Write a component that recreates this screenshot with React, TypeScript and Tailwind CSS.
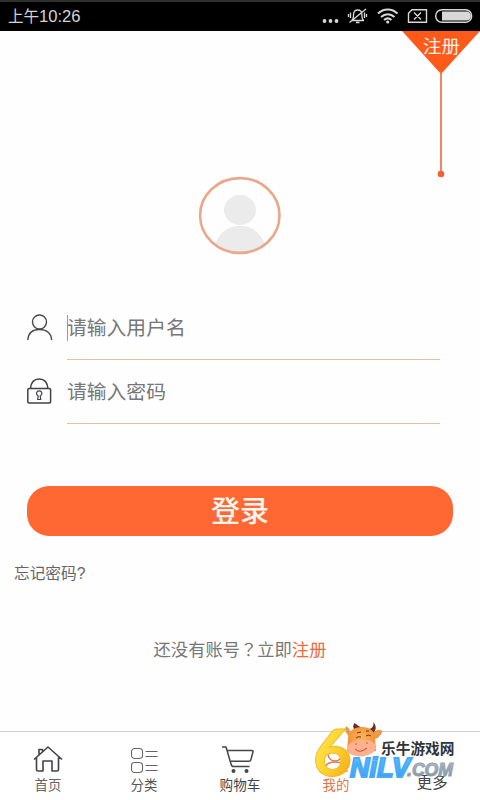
import { useState } from 'react';
import type { ReactNode } from 'react';

const StatusBar = () => (
  <header className="flex h-[31px] shrink-0 items-center justify-between border-t-2 border-[#2c3030] bg-black pl-2 pr-[7px] text-[#d4d4d4]">
    <span className="pt-0.5 text-[15.5px] leading-none">上午<span className="text-[16.6px]">10:26</span></span>
    <svg width="152" height="24" viewBox="322 5 152 24" fill="none" stroke="#d8d8d8" strokeWidth="1.4">
      <g fill="#d8d8d8" stroke="none">
        <circle cx="325.5" cy="21" r="1.9" />
        <circle cx="331.5" cy="21" r="1.9" />
        <circle cx="337.5" cy="21" r="1.9" />
      </g>
      <path d="M352.5 20.5c2-1 2-3 2-5.500c0-3 1.500-5 4.200-5s4.200 2 4.200 5c0 2.500 0 4.500 2 5.500zM357 22.500h3.500M350.500 22.500L367 9M351.500 12.500v5.500M349.500 14v3M365.500 12.500v5.500M367.500 14v3" strokeWidth="1.300" />
      <path d="M379 13.500c5.500-5.500 14-5.500 19.500 0M382 17c4-3.800 9.500-3.800 13.500 0M385 20c2.500-2.200 5-2.200 7.500 0" strokeWidth="2" />
      <circle cx="388.700" cy="22" r="1.600" fill="#d8d8d8" stroke="none" />
      <path d="M413 9.700h14.500v12.600h-18v-9zM415 12.500l7 7M422 12.500l-7 7" />
      <rect x="436.700" y="9.700" width="36" height="12.600" rx="6.300" />
      <path d="M443 11.500h24.500a4.500 4.500 0 0 1 0 9H443z" fill="#d8d8d8" stroke="none" />
    </svg>
  </header>
);

const RegisterRibbon = () => (
  <button className="absolute right-0 top-0 h-[148px] w-[78px]">
    <svg className="absolute inset-0" width="78" height="148" viewBox="0 0 78 148">
      <path d="M0 0H78L39 43z" fill="#ff5a1a" />
      <path d="M39 40V142" stroke="#ee6a3c" strokeWidth="1.6" />
      <circle cx="39" cy="143" r="3.3" fill="#f26132" />
    </svg>
    <span className="absolute left-[21px] top-[6px] text-[18.4px] leading-[20px] text-[#fff1e6]">注册</span>
  </button>
);

const Avatar = () => (
  <svg className="mx-auto mt-[145px] shrink-0" width="84" height="80" viewBox="198 176 84 80">
    <defs>
      <clipPath id="avatar">
        <ellipse cx="239.800" cy="215.500" rx="39" ry="36.500" />
      </clipPath>
    </defs>
    <g clipPath="url(#avatar)" fill="#ebebeb">
      <ellipse cx="240" cy="210" rx="16" ry="15" />
      <path d="M213 256c1-19 12-30 27-30s26 11 27 30z" />
    </g>
    <ellipse cx="239.800" cy="215.500" rx="39.700" ry="37.400" fill="none" stroke="#eaa88b" strokeWidth="2.600" />
  </svg>
);

interface FieldProps {
  icon: ReactNode;
  type: string;
  placeholder: string;
  value: string;
  caret?: boolean;
  onChange: (value: string) => void;
}

const Field = ({ icon, type, placeholder, value, caret, onChange }: FieldProps) => (
  <label className="flex h-16 items-stretch">
    <span className="flex w-10 items-center">{icon}</span>
    <span className="flex w-[373px] items-center border-b border-[#e3c39a]">
      {caret && <span className="-mr-px h-[26px] w-px bg-[#999]" />}
      <input
        type={type}
        value={value}
        placeholder={placeholder}
        onChange={(e) => onChange(e.target.value)}
        className="h-8 w-full bg-transparent pt-px text-[19.8px] text-[#777] outline-none placeholder:text-[#777]"
      />
    </span>
  </label>
);

const UserIcon = () => (
  <svg width="26" height="28" viewBox="0 0 26 28" fill="none" stroke="#4a4a52" strokeWidth="1.4">
    <circle cx="12.500" cy="8" r="7" />
    <path d="M.8 26c.5-7 5-10.500 11.700-10.500S24.200 19 24.700 26" />
  </svg>
);

const LockIcon = () => (
  <svg width="26" height="28" viewBox="0 0 26 28" fill="none" stroke="#42424a" strokeWidth="1.5">
    <rect x=".8" y="10.500" width="22.800" height="14.500" rx="1.200" />
    <path d="M3.500 10.500C4 4.500 7.300 1 12.200 1s8.200 3.500 8.700 9.500" />
    <path d="M11.200 18a2.700 2.700 0 1 1 2 0l.5 3.500h-3z" strokeWidth="1.200" />
  </svg>
);

const tabs = [
  {
    name: '首页',
    label: 'text-[13.4px] text-[#666]',
    icon: (
      <g stroke="#42424a" strokeWidth="1.600" strokeLinejoin="round">
        <path d="M2 14.500L16 2l14 12.500M4.500 12.500v12q0 1.500 1.500 1.500h5V16h9v10h5q1.500 0 1.500-1.500V12.500M7 10V4.500h3.500V6.500" />
      </g>
    ),
  },
  {
    name: '分类',
    label: 'text-[13.4px] text-[#555]',
    icon: (
      <g stroke="#666" strokeWidth="1.100">
        <rect x="3.500" y="3.500" width="11" height="10" rx="3.200" />
        <rect x="3.500" y="17.500" width="11" height="10" rx="3.200" />
        <path d="M17.500 6.500h12M17.500 11.500h12M17.500 20.500h12M17.500 25.500h12" />
      </g>
    ),
  },
  {
    name: '购物车',
    label: 'text-[13.6px] text-[#444]',
    icon: (
      <g stroke="#45454d" strokeWidth="1.500" strokeLinejoin="round">
        <path d="M-2 2h4l5 17q.5 2.500 2.500 2.500h16M3 5.500h25q1.200 0 1 1.300l-2.200 8.200q-.4 1.200-1.600 1.200H6.200" />
        <g fill="#45454d" stroke="none">
          <circle cx="9.500" cy="26" r="2" />
          <circle cx="22.500" cy="26" r="2" />
        </g>
      </g>
    ),
  },
  {
    name: '我的',
    label: 'text-[13.4px] text-[#e2754d]',
    icon: (
      <g stroke="#e2754d" strokeWidth="1.300">
        <circle cx="15" cy="9" r="7" />
        <path d="M3 27c1-7 5-10 12-10s11 3 12 10" />
      </g>
    ),
  },
  {
    name: '更多',
    label: 'relative -top-[3px] text-[15.6px] text-[#444]',
    icon: null,
  },
];

const TabBar = () => (
  <nav className="flex h-[69px] shrink-0 border-t border-[#cfcfcf] bg-white">
    {tabs.map((tab) => (
      <button key={tab.name} className="flex w-24 flex-col items-center pt-[13px]">
        <svg className="overflow-visible" width="32" height="30" viewBox="0 0 32 30" fill="none">
          {tab.icon}
        </svg>
        <span className={`mt-[3px] leading-[16px] ${tab.label}`}>{tab.name}</span>
      </button>
    ))}
  </nav>
);

const SiteLogo = () => (
  <svg className="pointer-events-none absolute bottom-0 right-0" width="180" height="100" viewBox="300 700 180 100">
    <defs>
      <linearGradient id="gold" x1="0" y1="0" x2="1" y2="1">
        <stop offset="0" stopColor="#fff06a" />
        <stop offset=".5" stopColor="#ffd52f" />
        <stop offset="1" stopColor="#f0a010" />
      </linearGradient>
      <linearGradient id="blue" x1="0" y1="0" x2="0" y2="1">
        <stop offset="0" stopColor="#6accff" />
        <stop offset="1" stopColor="#2f92f0" />
      </linearGradient>
      <linearGradient id="steel" x1="0" y1="0" x2="0" y2="1">
        <stop offset="0" stopColor="#b9c6d2" />
        <stop offset="1" stopColor="#74899b" />
      </linearGradient>
      <radialGradient id="cow" cx=".5" cy=".4" r=".6">
        <stop offset="0" stopColor="#ffb755" />
        <stop offset="1" stopColor="#ef8930" />
      </radialGradient>
    </defs>
    <text x="313" y="776" fontFamily="Lato, sans-serif" fontWeight="900" fontSize="65" textLength="39" lengthAdjust="spacingAndGlyphs" fill="url(#gold)" stroke="#f3b42a" strokeWidth=".8">6</text>
    <text x="350" y="776.500" fontFamily="Liberation Sans, sans-serif" fontStyle="italic" fontWeight="700" fontSize="27" textLength="60" lengthAdjust="spacingAndGlyphs" fill="url(#blue)" stroke="#48abf9" strokeWidth="2">NiLV</text>
    <text x="407" y="776" fontFamily="Liberation Sans, sans-serif" fontStyle="italic" fontWeight="700" fontSize="18" textLength="46" lengthAdjust="spacingAndGlyphs" fill="url(#steel)" stroke="#91a3b2" strokeWidth="1">.COM</text>
    <g>
      <path d="M355.500 731q-4-4-1-8l7 5zM369 729q5-1 4.500-7 4.500 6 0 11z" fill="#6b2d22" />
      <path d="M351 734q-3-8-5-7-1 7 5 10zM373 733q4-4 9-2-2 7-9 8z" fill="#f49a3d" stroke="#d77928" strokeWidth=".6" />
      <path d="M348 739c0-8 6-12 14-12s13 4 13 12l1 12h-29z" fill="url(#cow)" />
      <ellipse cx="361.500" cy="748" rx="14.500" ry="8.500" fill="#ffb18c" transform="rotate(-5 361 748)" />
      <path d="M355 749q5 5 12-1" fill="none" stroke="#c34432" strokeWidth="1" />
      <path d="M356 738q2-2 5-1M366 736q2-2 5 0M357 733l4-1M366 731l3 0" fill="none" stroke="#642d20" strokeWidth="1" />
      <circle cx="356" cy="744" r=".7" fill="#a54231" />
      <circle cx="367" cy="743" r=".7" fill="#a54231" />
    </g>
    <text x="381" y="753.500" fontFamily="Noto Sans CJK SC, sans-serif" fontWeight="700" fontSize="14.700" fill="#303338">乐牛游戏网</text>
  </svg>
);

export default function App() {
  const [username, setUsername] = useState('');
  const [password, setPassword] = useState('');

  return (
    <div className="relative flex h-[800px] w-[480px] flex-col overflow-hidden bg-[#fefefe] font-['Liberation_Sans','Noto_Sans_CJK_SC',sans-serif]">
      <StatusBar />
      <main className="relative flex flex-1 flex-col">
        <RegisterRibbon />
        <Avatar />
        <form className="ml-[27px] mt-10 w-[426px]">
          <Field icon={<UserIcon />} type="text" placeholder="请输入用户名" value={username} caret onChange={setUsername} />
          <Field icon={<LockIcon />} type="password" placeholder="请输入密码" value={password} onChange={setPassword} />
          <button type="button" className="mt-[62px] flex h-[50px] w-full items-center justify-center rounded-[22px] bg-[#ff6832] pt-[3px] text-[29px] font-medium leading-none text-[#fff6f0]">
            登录
          </button>
        </form>
        <a className="ml-3.5 mt-7 self-start text-[15.7px] leading-[20px] text-[#666]">忘记密码?</a>
        <p className="mt-[55px] text-center text-[17.3px] leading-[20px] text-[#777]">
          还没有账号<span className="font-['Noto_Sans_CJK_TC',sans-serif]" lang="zh-TW">？</span>立即<a className="text-[#ee6a3c]">注册</a>
        </p>
      </main>
      <TabBar />
      <SiteLogo />
    </div>
  );
}
